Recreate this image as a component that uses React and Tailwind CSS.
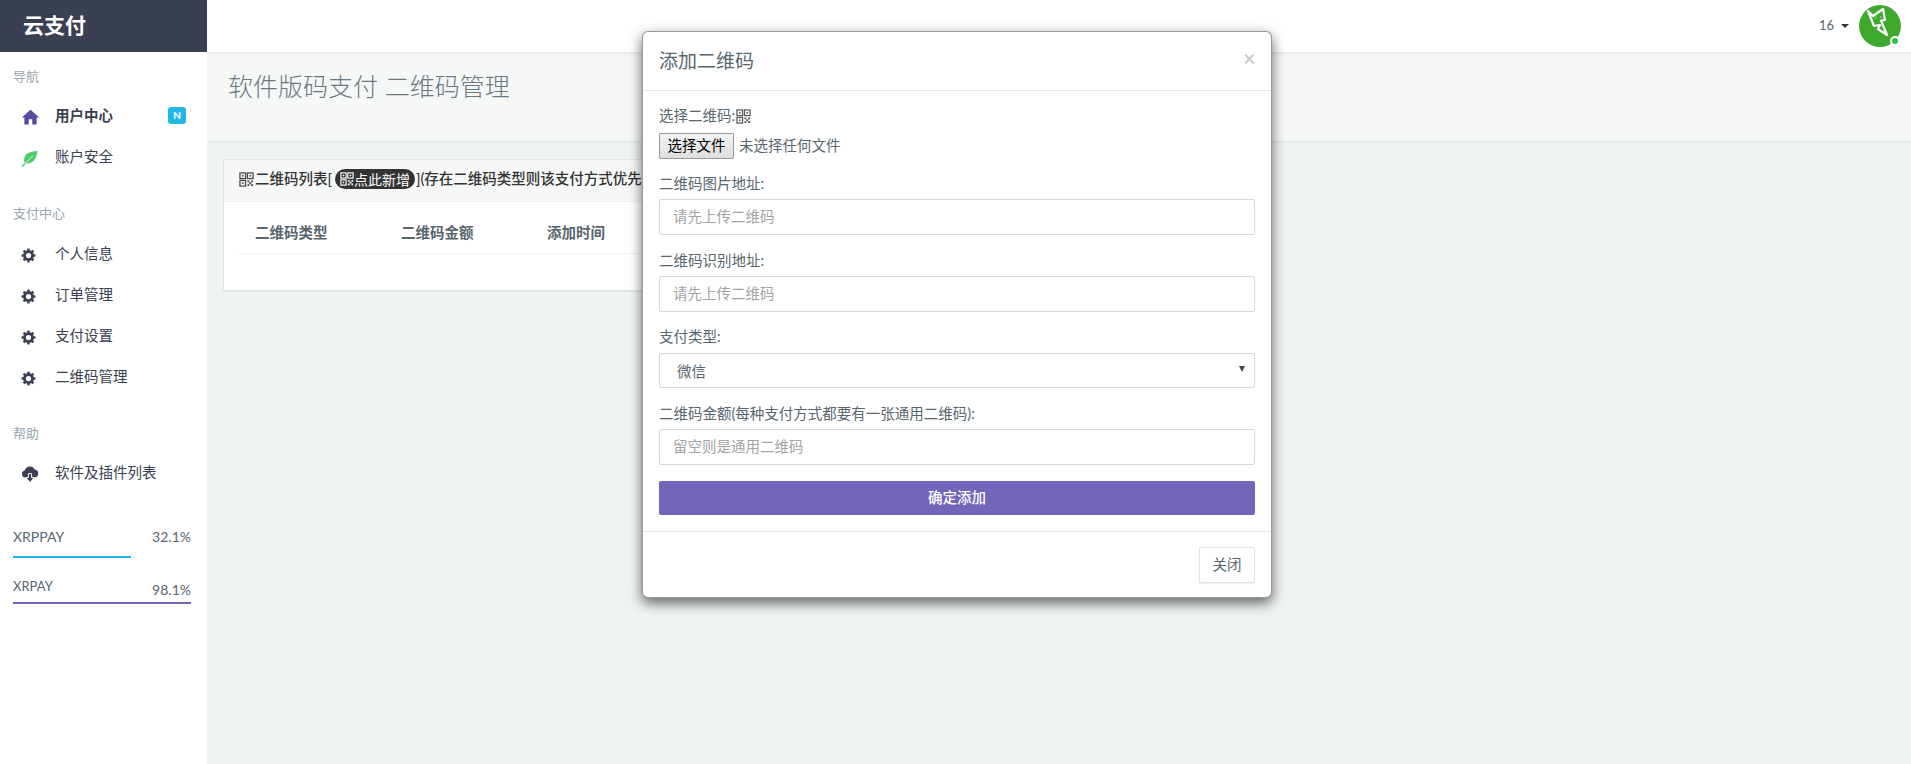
import React from "react";
import { MdHome } from "react-icons/md";

const FONT = "font-['Source_Sans_Pro','Lato','Noto_Sans_CJK_SC',sans-serif]";

const GearIcon = () => (
  <svg viewBox="0 0 16 16" className="h-[15px] w-[15px] text-[#3a3f51]" fill="none" stroke="currentColor">
    <circle cx="8" cy="8" r="4.3" strokeWidth="3" />
    {[0, 45, 90, 135, 180, 225, 270, 315].map((a) => (
      <line key={a} x1="8" y1="0.6" x2="8" y2="3" strokeWidth="2.6" transform={`rotate(${a} 8 8)`} />
    ))}
  </svg>
);

const LeafIcon = () => (
  <svg viewBox="0 0 16 16" className="h-[17px] w-[17px]">
    <path d="M15.5 1C9 1.5 4.5 2.5 3.2 7.5C2.6 10 3 12 4.5 12.7C10.5 13.5 14.5 9 15.5 1Z" fill="#4fcb6b" />
    <path d="M1 15.5L4 12.5" stroke="#4fcb6b" strokeWidth="1.3" />
    <path d="M4 12.5L11 5.5" stroke="#fff" strokeWidth="0.8" />
  </svg>
);

const CloudIcon = () => (
  <svg viewBox="0 0 18 18" className="h-[18px] w-[18px]">
    <path d="M4.3 12.5a3.6 3.6 0 0 1-.5-7.1a5.3 5.3 0 0 1 9.9-1a4.1 4.1 0 0 1 .2 8.1Z" fill="#3a3f51" />
    <path d="M7.4 8.6h3.2v4h2.6L9 17.6L4.8 12.6h2.6Z" fill="#3a3f51" stroke="#fff" strokeWidth="1" />
  </svg>
);

const QrIcon = ({ className }) => (
  <svg viewBox="0 0 16 16" className={className} fill="none" stroke="currentColor" strokeWidth="1.3">
    <rect x="1" y="1" width="6" height="6" />
    <rect x="9" y="1" width="6" height="6" />
    <rect x="1" y="9" width="6" height="6" />
    <path d="M3.4 3.4h1.2v1.2H3.4ZM11.4 3.4h1.2v1.2h-1.2ZM3.4 11.4h1.2v1.2H3.4Z" fill="currentColor" strokeWidth="0.6" />
    <path d="M9 9h2v2H9ZM13 9h2v2h-2ZM11 11h2v2h-2ZM9 13h2v2H9ZM13 13h2v2h-2Z" fill="currentColor" stroke="none" />
  </svg>
);

const NavGroup = ({ title, children, className = "" }) => (
  <div className={className}>
    <div className="h-[22px] pl-[13px] text-[13px] leading-[22px] text-[#98a6ad]">{title}</div>
    <div className="mt-[8px]">{children}</div>
  </div>
);

const NavItem = ({ icon, label, bold, badge }) => (
  <div className="flex h-[41px] items-center pl-[21px] pr-[21px] text-[14.5px] text-[#3a3f51]">
    <span className="flex w-[34px] shrink-0 items-center pt-[3px]">{icon}</span>
    <span className={bold ? "font-bold" : ""}>{label}</span>
    {badge && (
      <span className="ml-auto flex h-[17px] w-[18px] items-center justify-center rounded-[3px] bg-[#23b7e5] text-[10px] font-bold text-white">
        {badge}
      </span>
    )}
  </div>
);

const Field = ({ label, placeholder, className = "" }) => (
  <div className={className}>
    <div className="text-[14.5px] leading-[20px] text-[#58666e]">{label}</div>
    <input
      readOnly
      placeholder={placeholder}
      className="mt-[5px] block h-[36px] w-full rounded-[2px] border border-[#cfdadd] bg-white px-[13px] pb-[2px] text-[14.5px] outline-none placeholder:text-[#a3a3a3]"
    />
  </div>
);

const Modal = () => (
  <div className="absolute left-[642px] top-[31px] w-[630px] rounded-[6px] border border-black/40 bg-white shadow-[0_5px_13px_rgba(0,0,0,0.6)]">
    <div className="flex h-[59px] items-start justify-between border-b border-[#e5e5e5] pl-[16px] pr-[16px] pt-[16px]">
      <span className="text-[19px] leading-[26px] text-[#58666e]">添加二维码</span>
      <span className="text-[20px] font-bold leading-[20px] text-[#c8c8c8]">×</span>
    </div>
    <div className="px-[16px] pt-[15px]">
      <div className="flex h-[20px] items-center text-[14.5px] text-[#58666e]">
        选择二维码:<QrIcon className="ml-[1px] h-[15px] w-[15px] text-[#555]" />
      </div>
      <div className="mt-[7px] flex items-center text-[14.5px] text-[#58666e]">
        <button className="h-[26px] w-[75px] rounded-[1px] border border-[#999] bg-linear-to-b from-[#f4f4f4] to-[#dedede] text-[14.5px] leading-[22px] text-black">
          选择文件
        </button>
        <span className="ml-[5px]">未选择任何文件</span>
      </div>
      <Field className="mt-[15px]" label="二维码图片地址:" placeholder="请先上传二维码" />
      <Field className="mt-[16px]" label="二维码识别地址:" placeholder="请先上传二维码" />
      <div className="mt-[15px]">
        <div className="text-[14.5px] leading-[20px] text-[#58666e]">支付类型:</div>
        <div className="mt-[6px] flex h-[35px] items-center justify-between rounded-[2px] border border-[#cfdadd] pl-[17px] pr-[9px] text-[14.5px] text-[#58666e]">
          <span className="pt-[2px]">微信</span>
          <span className="mb-[3px] h-0 w-0 border-x-[3px] border-t-[6px] border-x-transparent border-t-[#444]" />
        </div>
      </div>
      <Field className="mt-[16px]" label="二维码金额(每种支付方式都要有一张通用二维码):" placeholder="留空则是通用二维码" />
      <button className="mt-[16px] block h-[34px] w-full rounded-[2px] bg-[#7266ba] pb-[1px] text-[14.5px] font-medium text-white">
        确定添加
      </button>
    </div>
    <div className="mt-[16px] flex h-[66px] justify-end border-t border-[#e5e5e5] px-[16px] pt-[15px]">
      <button className="h-[36px] w-[56px] rounded-[2px] border border-[#dee5e7] bg-white text-[14.5px] text-[#58666e] shadow-[0_1px_1px_rgba(90,90,90,0.1)]">
        关闭
      </button>
    </div>
  </div>
);

export default function App() {
  return (
    <div className={`relative flex h-[764px] w-full overflow-hidden bg-[#f0f3f4] ${FONT}`}>
      <aside className="w-[207px] shrink-0 bg-white">
        <div className="flex h-[52px] items-center bg-[#3a3f51] pb-[2px] pl-[23px] text-[21px] font-bold text-white">云支付</div>
        <NavGroup className="pt-[13px]" title="导航">
          <NavItem bold label="用户中心" badge="N" icon={<MdHome className="-ml-[1px] text-[21px] text-[#5a4ba0]" />} />
          <NavItem label="账户安全" icon={<LeafIcon />} />
        </NavGroup>
        <NavGroup className="pt-[25px]" title="支付中心">
          <div className="pt-[1px]">
            <NavItem label="个人信息" icon={<GearIcon />} />
            <NavItem label="订单管理" icon={<GearIcon />} />
            <NavItem label="支付设置" icon={<GearIcon />} />
            <NavItem label="二维码管理" icon={<GearIcon />} />
          </div>
        </NavGroup>
        <NavGroup className="pt-[25px]" title="帮助">
          <NavItem label="软件及插件列表" icon={<CloudIcon />} />
        </NavGroup>
        <div className="px-[13px] pr-[16px] pt-[32px] text-[14px] text-[#58666e]">
          <div className="flex h-[22px] items-center justify-between"><span>XRPPAY</span><span>32.1%</span></div>
          <div className="mt-[9px] h-[2px] w-[118px] bg-[#23b7e5]" />
          <div className="mt-[19px] flex h-[22px] items-start justify-between">
            <span className="text-[13px]">XRPAY</span>
            <span className="mt-[2px]">98.1%</span>
          </div>
          <div className="mt-[3px] h-[2px] w-[178px] bg-[#7266ba]" />
        </div>
      </aside>
      <div className="min-w-0 flex-1">
        <header className="relative flex h-[52px] items-center justify-end bg-white pr-[10px] shadow-[0_2px_2px_rgba(0,0,0,0.06)]">
          <span className="mr-[4px] text-[13px] text-[#58666e]">16</span>
          <span className="ml-[3px] h-0 w-0 border-x-[4px] border-t-[4px] border-x-transparent border-t-[#333]" />
          <div className="relative ml-[10px] h-[42px] w-[42px] rounded-full bg-[#3fa92e]">
            <svg viewBox="0 0 42 42" className="h-[42px] w-[42px]" fill="none" stroke="white" strokeWidth="2.2" strokeLinejoin="round">
              <path d="M9 6L14 11L24 4L26 15L22 15.5L28 30L19 24L21 20L15 21Z" />
              <path d="M16 13h1M21 12h1" strokeWidth="1.2" />
            </svg>
            <span className="absolute bottom-[1px] right-[1px] h-[10px] w-[10px] rounded-full border-2 border-white bg-[#27c24c]" />
          </div>
        </header>
        <div className="h-[90px] border-b border-[#dee5e7] bg-[#f6f8f8] pl-[21px] pt-[16px] text-[25px] font-light leading-[36px] text-[#6b7880]">
          软件版码支付 二维码管理
        </div>
        <section className="ml-[16px] mt-[17px] h-[132px] w-[880px] rounded-[2px] border border-[#dee5e7] bg-white shadow-[0_1px_1px_rgba(0,0,0,0.05)]">
          <div className="flex h-[42px] items-center border-b border-[#edf1f2] bg-[#f6f8f8] pb-[3px] pl-[15px] text-[14.5px] font-medium text-[#333]">
            <QrIcon className="mr-[1px] h-[15px] w-[15px] text-[#444]" />
            二维码列表[
            <span className="ml-[3px] mr-[1px] flex h-[20px] items-center rounded-full bg-[#333] px-[5px] text-[14px] font-normal text-white">
              <QrIcon className="h-[14px] w-[14px]" />点此新增
            </span>
            ](存在二维码类型则该支付方式优先
          </div>
          <div className="mx-[15px] flex h-[52px] items-end border-b border-[#eaeff0] pb-[9px] pl-[16px] text-[14.5px] font-bold text-[#58666e]">
            <span className="w-[146px]">二维码类型</span>
            <span className="w-[146px]">二维码金额</span>
            <span>添加时间</span>
          </div>
        </section>
      </div>
      <Modal />
    </div>
  );
}
